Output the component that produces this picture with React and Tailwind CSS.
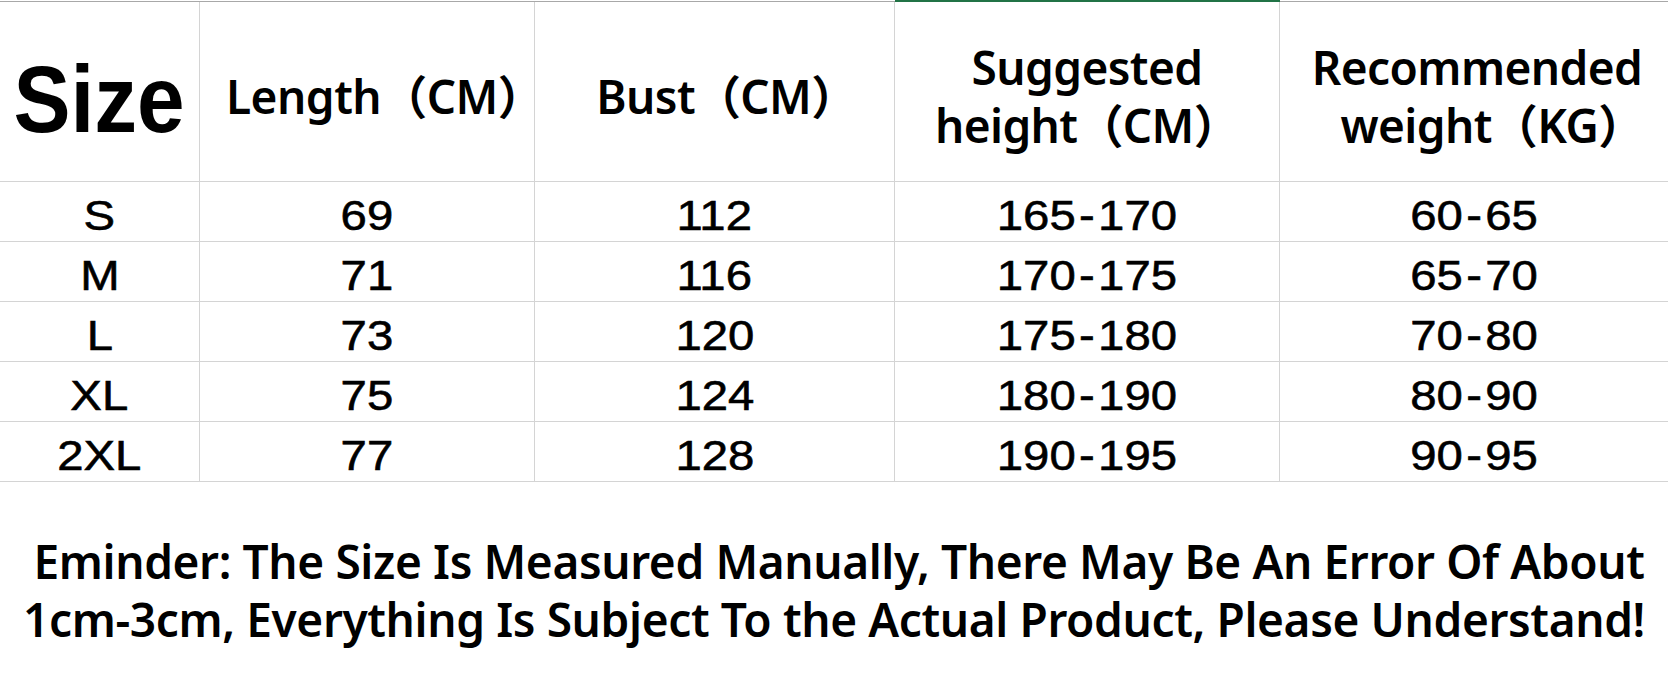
import React from "react";

const rows = [
  ["S", "69", "112", "165-170", "60-65"],
  ["M", "71", "116", "170-175", "65-70"],
  ["L", "73", "120", "175-180", "70-80"],
  ["XL", "75", "124", "180-190", "80-90"],
  ["2XL", "77", "128", "190-195", "90-95"],
];

const colW = ["w-[200px]", "w-[335px]", "w-[360px]", "w-[385px]", "flex-1"];
const colBorder = [
  "border-r border-[#d4d4d4]",
  "border-r border-[#d4d4d4]",
  "border-r border-[#d4d4d4]",
  "border-r border-[#d4d4d4]",
  "",
];

const yahei = "font-['Noto_Sans','Noto_Sans_CJK_SC',sans-serif] font-semibold";

function Val({ v }) {
  const parts = v.split("-");
  return (
    <span className="inline-block scale-x-[1.1] [-webkit-text-stroke:0.6px_black]">
      {parts.length === 2 ? (
        <>
          {parts[0]}
          <span className="mx-[3px]">-</span>
          {parts[1]}
        </>
      ) : (
        v
      )}
    </span>
  );
}

export default function App() {
  return (
    <div className="w-[1668px] h-[679px] bg-white text-black overflow-hidden">
      {/* top border strip */}
      <div className="flex h-[2px]">
        <div className="w-[895px] border-b border-[#a8a8a8]" />
        <div className="w-[385px] bg-[#217346]" />
        <div className="flex-1 border-b border-[#a8a8a8]" />
      </div>

      {/* header row */}
      <div className="flex h-[180px] border-b border-[#d4d4d4]">
        <div className={`${colW[0]} ${colBorder[0]} flex items-center justify-center pt-[16px]`}>
          <span className="inline-block font-['Liberation_Sans',Arial,sans-serif] font-bold text-[94px] leading-none scale-x-[0.91]">
            Size
          </span>
        </div>
        <div className={`${colW[1]} ${colBorder[1]} flex items-center justify-center pt-[9px] pl-[26px] ${yahei} text-[46px] leading-[58px] tracking-[-0.5px] text-center`}>
          <span>Length（CM）</span>
        </div>
        <div className={`${colW[2]} ${colBorder[2]} flex items-center justify-center pt-[9px] pl-[24px] ${yahei} text-[46px] leading-[58px] tracking-[-0.6px] text-center`}>
          <span>Bust（CM）</span>
        </div>
        <div className={`${colW[3]} ${colBorder[3]} flex items-center justify-center pt-[9px] ${yahei} text-[46px] leading-[58px] tracking-[-0.6px] text-center`}>
          <div>
            <div>Suggested</div>
            <div>height（CM）</div>
          </div>
        </div>
        <div className={`${colW[4]} flex items-center justify-center pt-[9px] pl-[6px] ${yahei} text-[46px] leading-[58px] tracking-[-0.6px] text-center`}>
          <div>
            <div>Recommended</div>
            <div className="pl-[30px]">weight（KG）</div>
          </div>
        </div>
      </div>

      {/* data rows */}
      {rows.map((r) => (
        <div key={r[0]} className="flex h-[60px] border-b border-[#d4d4d4]">
          {r.map((v, i) => (
            <div
              key={i}
              className={`${colW[i]} ${colBorder[i]} flex items-center justify-center pt-[8px] font-['Liberation_Sans',Arial,sans-serif] text-[43px] leading-none`}
            >
              <Val v={v} />
            </div>
          ))}
        </div>
      ))}

      {/* note */}
      <div className={`mt-[50px] ${yahei} text-[46px] leading-[58px] tracking-[-0.38px] text-center`}>
        <p className="pl-[10px]">Eminder: The Size Is Measured Manually, There May Be An Error Of About</p>
        <p>1cm-3cm, Everything Is Subject To the Actual Product, Please Understand!</p>
      </div>
    </div>
  );
}
